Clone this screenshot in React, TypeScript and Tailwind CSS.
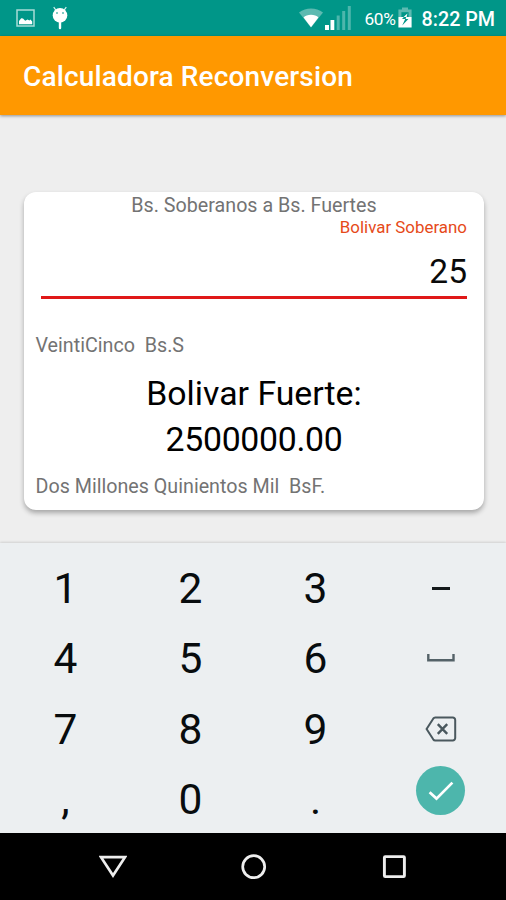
import { useState } from 'react';
import type { ReactNode } from 'react';

type Key = { id: string; label: ReactNode };

function PictureIcon() {
  return (
    <svg className="h-[18px] w-[19px]" viewBox="0 0 19 18" fill="none">
      <rect x="1" y="1" width="17" height="16" stroke="#a8dcd6" strokeWidth="1.5" />
      <path d="M3 15.2V12l2.2-2.8 1.8.4 2.2 2.2 2.4-1.4 1.8 1 1-.8 1.8 2v2.6z" fill="#fff" />
    </svg>
  );
}

function DebugIcon() {
  return (
    <svg className="h-[24px] w-[18px]" viewBox="0 0 18 24">
      <path d="M2.7 1.2l2.2 3M15.3 1.2l-2.2 3" stroke="#d9f0ee" strokeWidth="1.2" />
      <circle cx="9" cy="9.4" r="7.3" fill="#fff" />
      <path d="M9 16v6" stroke="#fff" strokeWidth="2.4" strokeLinecap="round" />
      <circle cx="6" cy="7" r="1" fill="#5dbab1" />
      <circle cx="12" cy="7" r="1" fill="#5dbab1" />
    </svg>
  );
}

function WifiIcon() {
  return (
    <svg className="h-[20px] w-[24px]" viewBox="0 0 24 20">
      <path d="M0 4.6C7 -1 17 -1 24 4.6L12 19.6z" fill="#5dbab1" />
      <path d="M4.6 9.6C7.5 5.9 16.5 5.9 19.4 9.6L12 19.2z" fill="#fff" />
    </svg>
  );
}

function SignalIcon() {
  return (
    <svg className="h-[25px] w-[27px]" viewBox="0 0 27 25">
      <path d="M0 19h4v5H0zM5.5 14h3.8v10H5.5z" fill="#fff" />
      <path d="M11.7 9.5h3V24h-3zM17.2 5h3v19h-3zM22.8 0h3v24h-3z" fill="#4db6ac" />
    </svg>
  );
}

function BatteryIcon() {
  return (
    <svg className="h-[21px] w-[14px]" viewBox="0 0 14 21">
      <path d="M4 .5h6v2h3.6V10H.4V2.5H4z" fill="#5dbab1" />
      <path d="M.4 10h13.2v10.5H.4z" fill="#fff" />
      <path d="M3.4 5.2h7.2V10H3.4z" fill="#009688" />
      <path d="M9.6 6L4 12h3.2l-3 6.5L10.4 12H7.6z" fill="#009688" />
      <path d="M9.4 6.4L5.6 10h3z" fill="#fff" />
    </svg>
  );
}

function SpaceIcon() {
  return (
    <svg className="h-[8px] w-[28px]" viewBox="0 0 28 8" fill="none">
      <path d="M1.3 0v6.3h25.2V0" stroke="#546268" strokeWidth="2.4" />
    </svg>
  );
}

function BackspaceIcon() {
  return (
    <svg className="h-[26px] w-[32px]" viewBox="0 0 32 26" fill="none" stroke="#4a585e" strokeWidth="2">
      <path d="M10.2 1.6h17.6a2.4 2.4 0 0 1 2.4 2.4v18a2.4 2.4 0 0 1-2.4 2.4H10.2c-.8 0-1.5-.4-2-1.1L1.6 13l6.6-10.3c.5-.7 1.2-1.1 2-1.1z" />
      <path d="M12.8 8.2l9.4 9.6M22.2 8.2l-9.4 9.6" strokeWidth="2.4" />
    </svg>
  );
}

function EnterButton() {
  return (
    <span className="flex size-[49px] items-center justify-center rounded-full bg-[#4db6ac]">
      <svg className="h-[20px] w-[26px]" viewBox="0 0 26 20" fill="none">
        <path d="M1.6 11.2l6.9 6.4L24.4 1.6" stroke="#fff" strokeWidth="2.7" />
      </svg>
    </span>
  );
}

const keys: Key[] = [
  { id: '1', label: '1' },
  { id: '2', label: '2' },
  { id: '3', label: '3' },
  { id: 'minus', label: <span className="-mt-[2px] h-[3px] w-[18px] bg-[#14191b]" /> },
  { id: '4', label: '4' },
  { id: '5', label: '5' },
  { id: '6', label: '6' },
  { id: 'space', label: <span className="-mt-[2px]"><SpaceIcon /></span> },
  { id: '7', label: '7' },
  { id: '8', label: '8' },
  { id: '9', label: '9' },
  { id: 'delete', label: <span className="-mt-[2px]"><BackspaceIcon /></span> },
  { id: ',', label: ',' },
  { id: '0', label: '0' },
  { id: '.', label: '.' },
  { id: 'enter', label: <span className="-mt-[19px]"><EnterButton /></span> },
];

function StatusBar() {
  return (
    <div className="flex h-9 items-center justify-between bg-[#009688] pl-4 pr-[11px] text-white">
      <div className="flex items-center gap-4">
        <PictureIcon />
        <DebugIcon />
      </div>
      <div className="flex items-center">
        <WifiIcon />
        <span className="ml-[2px] mt-px"><SignalIcon /></span>
        <span className="ml-[12px] mt-[3px] text-[17.3px] tracking-[-0.3px]">60%</span>
        <span className="ml-[2px]"><BatteryIcon /></span>
        <span className="ml-[10px] mt-[4px] text-[19.7px] font-medium">8:22 PM</span>
      </div>
    </div>
  );
}

function Keypad({ onPress }: { onPress: (id: string) => void }) {
  return (
    <div className="h-[290px] bg-[#eceff1] px-[3px] pt-[11px] shadow-[0_-1px_2px_rgba(0,0,0,0.12)]">
      <div className="grid auto-rows-[70.3px] grid-cols-4">
        {keys.map((key) => (
          <button
            key={key.id}
            onClick={() => onPress(key.id)}
            className="flex items-center justify-center text-[42.5px] leading-[44px] text-[#080c0e]"
          >
            {key.label}
          </button>
        ))}
      </div>
    </div>
  );
}

function NavBar() {
  return (
    <div className="flex h-[67px] items-center justify-center gap-[113px] bg-black pl-px">
      <svg className="h-7 w-7" viewBox="0 0 28 28" fill="none">
        <path d="M2 4.2h24L14 22.6z" stroke="#eee" strokeWidth="2.7" />
      </svg>
      <svg className="h-7 w-7" viewBox="0 0 28 28" fill="none">
        <circle cx="13.7" cy="13.7" r="11" stroke="#eee" strokeWidth="2.7" />
      </svg>
      <svg className="h-7 w-7" viewBox="0 0 28 28" fill="none">
        <rect x="3.4" y="3.6" width="20" height="20" rx="0.8" stroke="#eee" strokeWidth="2.9" />
      </svg>
    </div>
  );
}

export default function App() {
  const [amount, setAmount] = useState('25');

  const handlePress = (id: string) => {
    if (id === 'delete') setAmount((value) => value.slice(0, -1));
    else if (/^\d$/.test(id)) setAmount((value) => value + id);
  };

  return (
    <div className="flex h-[900px] w-[506px] flex-col overflow-hidden bg-[#eeeeee] font-['Roboto',sans-serif]">
      <StatusBar />
      <header className="z-10 flex h-[79px] items-center bg-[#ff9800] pl-[23px] shadow-[0_1px_3px_rgba(0,0,0,0.4)]">
        <h1 className="mt-[3px] text-[28px] font-medium tracking-[0.15px] text-white">Calculadora Reconversion</h1>
      </header>

      <main className="flex-1 overflow-hidden pl-6 pr-[22px] pt-[77px]">
        <section className="flex h-[318px] flex-col rounded-xl bg-white px-[11.5px] text-[19.7px] leading-[23px] text-[#737373] shadow-[0_3px_5px_rgba(0,0,0,0.3)]">
          <p className="mt-[2px] text-center">Bs. Soberanos a Bs. Fuertes</p>
          <div className="ml-[5.5px] mr-[5.5px] flex h-[82px] flex-col border-b-[3px] border-[#e01818] text-right">
            <span className="text-[16.9px] leading-5 text-[#e64a19]">Bolivar Soberano</span>
            <span className="mt-[15px] text-[33.5px] leading-[40px] text-[#0a0a0a]">{amount}</span>
          </div>
          <p className="mt-[34.5px] whitespace-pre">VeintiCinco  Bs.S</p>
          <div className="mt-[14.5px] text-center text-[33.8px] leading-[46px] text-black">
            <p>Bolivar Fuerte:</p>
            <p className="tracking-[-0.3px]">{Number(amount) * 100000}.00</p>
          </div>
          <p className="mt-[12px] whitespace-pre">Dos Millones Quinientos Mil  BsF.</p>
        </section>
      </main>

      <Keypad onPress={handlePress} />
      <NavBar />
    </div>
  );
}
